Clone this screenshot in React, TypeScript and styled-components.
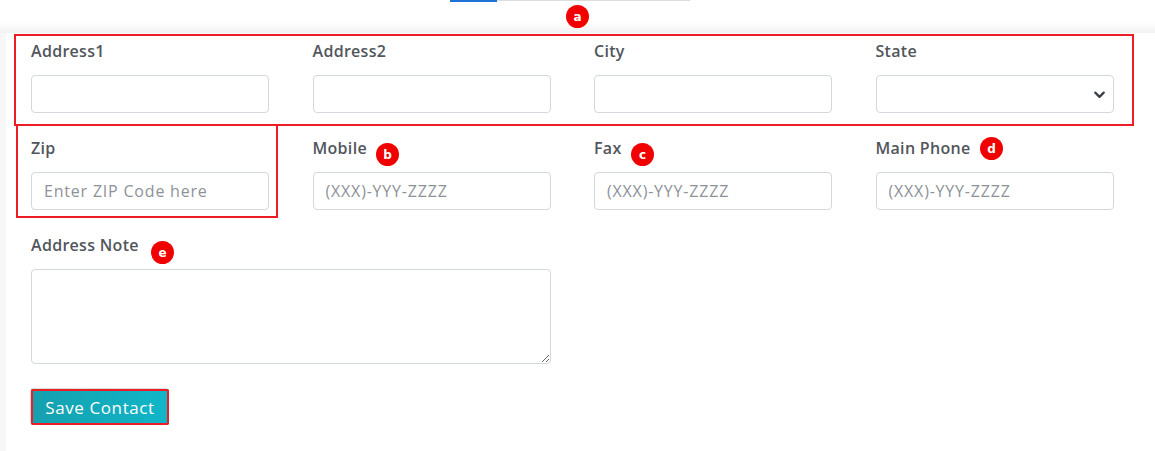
import styled, { createGlobalStyle } from 'styled-components';

const GlobalStyle = createGlobalStyle`
  html, body {
    margin: 0;
    padding: 0;
    background: #ffffff;
  }
  * {
    box-sizing: border-box;
  }
`;

type Marker = {
  letter: string;
  left: number;
  top: number;
};

const markers: Marker[] = [
  { letter: 'a', left: 566, top: 5 },
  { letter: 'b', left: 376, top: 143 },
  { letter: 'c', left: 631, top: 143 },
  { letter: 'd', left: 980, top: 137 },
  { letter: 'e', left: 151, top: 241 },
];

const Field = ({
  label,
  placeholder,
  select,
}: {
  label: string;
  placeholder?: string;
  select?: boolean;
}) => (
  <FieldWrap>
    <Label>{label}</Label>
    {select ? (
      <SelectBox>
        <Chevron viewBox="0 0 16 16">
          <path d="M3.5 6 L8 10.5 L12.5 6" />
        </Chevron>
      </SelectBox>
    ) : (
      <Input placeholder={placeholder} />
    )}
  </FieldWrap>
);

export default function App() {
  return (
    <Page>
      <GlobalStyle />
      <TopStrip>
        <Tabs>
          <TabActive />
          <TabRest />
        </Tabs>
      </TopStrip>
      <Shell>
        <Card>
          <Grid>
            <Field label="Address1" />
            <Field label="Address2" />
            <Field label="City" />
            <Field label="State" select />
            <Field label="Zip" placeholder="Enter ZIP Code here" />
            <Field label="Mobile" placeholder="(XXX)-YYY-ZZZZ" />
            <Field label="Fax" placeholder="(XXX)-YYY-ZZZZ" />
            <Field label="Main Phone" placeholder="(XXX)-YYY-ZZZZ" />
            <NoteWrap>
              <Label>Address Note</Label>
              <TextArea />
            </NoteWrap>
          </Grid>
          <SaveButton>Save Contact</SaveButton>
        </Card>
      </Shell>

      <BoxTop />
      <BoxZip />
      {markers.map((m) => (
        <Badge key={m.letter} style={{ left: m.left, top: m.top }}>
          {m.letter}
        </Badge>
      ))}
    </Page>
  );
}

const Page = styled.div`
  position: relative;
  width: 1155px;
  height: 451px;
  overflow: hidden;
  font-family: 'Open Sans', 'Liberation Sans', sans-serif;
`;

const TopStrip = styled.div`
  height: 33px;
  background: linear-gradient(to bottom, #ffffff 0, #ffffff 22px, #f2f2f2 33px);
`;

const Tabs = styled.div`
  display: flex;
  margin-left: 450px;
  align-items: flex-start;
`;

const TabActive = styled.div`
  width: 47px;
  height: 2px;
  background: #1f73d6;
`;

const TabRest = styled.div`
  width: 193px;
  height: 1px;
  background: #dcdcdc;
`;

const Shell = styled.div`
  background: #f7f7f7;
  padding-left: 6px;
  height: 418px;
`;

const Card = styled.div`
  background: #ffffff;
  height: 100%;
  padding: 7px 0 0 25px;
`;

const Grid = styled.div`
  display: grid;
  grid-template-columns: repeat(4, 238px);
  column-gap: 43.5px;
  row-gap: 24px;
`;

const FieldWrap = styled.div`
  display: flex;
  flex-direction: column;
`;

const NoteWrap = styled(FieldWrap)`
  grid-column: span 2;
`;

const Label = styled.label`
  font-size: 16px;
  font-weight: 600;
  line-height: 22px;
  color: #51565c;
  margin-bottom: 13px;
  letter-spacing: 0.3px;
`;

const Input = styled.input`
  height: 38px;
  width: 100%;
  border: 1px solid #d3d8de;
  border-radius: 4px;
  padding: 0 12px;
  font-family: 'Open Sans', 'Liberation Sans', sans-serif;
  font-size: 16px;
  letter-spacing: 0.8px;
  color: #333;
  outline: none;
  &::placeholder {
    color: #8d9298;
  }
`;

const SelectBox = styled.div`
  height: 38px;
  border: 1px solid #d3d8de;
  border-radius: 4px;
  display: flex;
  align-items: center;
  justify-content: flex-end;
  padding-right: 6px;
`;

const Chevron = styled.svg`
  width: 15px;
  height: 15px;
  fill: none;
  stroke: #3a3f45;
  stroke-width: 2.4;
  stroke-linecap: round;
  stroke-linejoin: round;
`;

const TextArea = styled.textarea`
  height: 95px;
  width: 100%;
  border: 1px solid #d3d8de;
  border-radius: 4px;
  resize: vertical;
  outline: none;
  font-family: 'Open Sans', 'Liberation Sans', sans-serif;
`;

const SaveButton = styled.button`
  margin-top: 25px;
  width: 138px;
  height: 36px;
  padding: 0;
  border: none;
  border-radius: 2px;
  background: linear-gradient(to right, #16a0ae, #10b6c8);
  color: #ffffff;
  font-family: 'Open Sans', 'Liberation Sans', sans-serif;
  font-size: 17px;
  letter-spacing: 0.6px;
  font-weight: 500;
  outline: 2px solid #ee1c25;
  outline-offset: -2px;
  box-shadow: -1px -1px 1px rgba(0, 0, 0, 0.15);
`;

const BoxTop = styled.div`
  position: absolute;
  left: 14px;
  top: 34px;
  width: 1120px;
  height: 92px;
  border: 2px solid #ee1c25;
  pointer-events: none;
`;

const BoxZip = styled.div`
  position: absolute;
  left: 16px;
  top: 124px;
  width: 262px;
  height: 94px;
  border: 2px solid #ee1c25;
  border-top: none;
  pointer-events: none;
`;

const Badge = styled.div`
  position: absolute;
  width: 23px;
  height: 23px;
  border-radius: 50%;
  background: #f00000;
  color: #ffffff;
  font-family: 'DejaVu Sans', sans-serif;
  font-size: 12px;
  font-weight: 700;
  display: flex;
  align-items: center;
  justify-content: center;
  line-height: 1;
`;
